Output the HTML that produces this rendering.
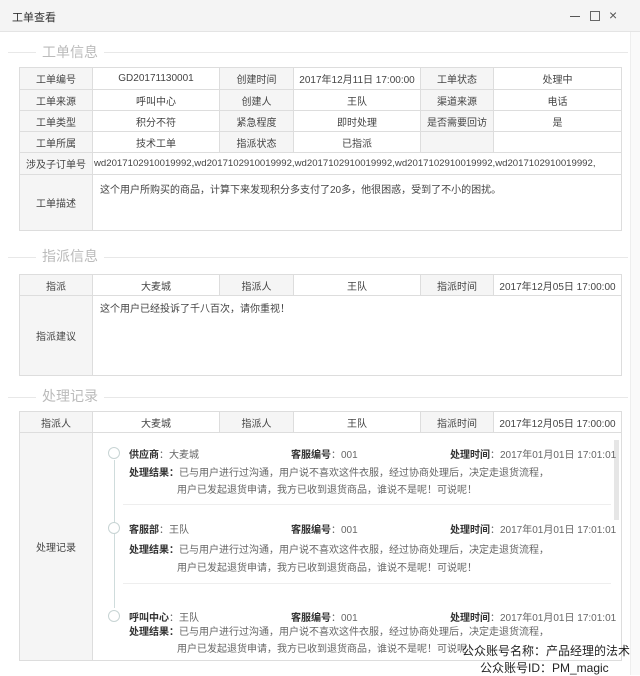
<!DOCTYPE html>
<html><head><meta charset="utf-8"><style>
*{margin:0;padding:0;box-sizing:border-box}
body{width:640px;height:675px;background:#fff;font-family:"Liberation Sans","Noto Sans CJK SC",sans-serif;font-size:10px;color:#444;position:relative;overflow:hidden}
.a{position:absolute;white-space:nowrap}
.tb{position:absolute;left:0;top:0;width:640px;height:32px;background:#f4f4f4;border-bottom:1px solid #e4e4e4}
.sec{position:absolute;left:8px;width:620px;height:1px;background:#e8e8e8}
.st{position:absolute;background:#fff;color:#bbb;font-size:14px;padding:0 6px;line-height:16px}
table{position:absolute;left:19px;width:602px;border-collapse:collapse;table-layout:fixed}
td{border:1px solid #ddd;text-align:center;font-size:10px;padding:0;white-space:nowrap;overflow:hidden}
td.h{background:#f5f5f5}
.c{position:absolute;width:12px;height:12px;border:1px solid #c8d4d4;border-radius:50%;background:#fff}
b{font-weight:bold;color:#333}
.g{color:#666}
</style></head><body>
<div class="tb"></div>
<div class="a" style="left:12px;top:9px;font-size:11px;color:#333">工单查看</div>
<div class="a" style="left:570px;top:16px;width:10px;height:1px;background:#555"></div>
<div class="a" style="left:590px;top:11px;width:10px;height:10px;border:1px solid #666"></div>
<div class="a" style="left:609px;top:7px;font-size:14px;color:#555">×</div>
<div class="a" style="right:0;top:32px;width:10px;height:643px;background:#fafafa;border-left:1px solid #eee"></div>

<div class="sec" style="top:52px"></div><div class="st" style="left:36px;top:44px">工单信息</div>
<table style="top:67px">
<colgroup><col style="width:73px"><col style="width:127px"><col style="width:74px"><col style="width:127px"><col style="width:73px"><col style="width:128px"></colgroup>
<tr style="height:22px"><td class="h">工单编号</td><td>GD20171130001</td><td class="h">创建时间</td><td>2017年12月11日 17:00:00</td><td class="h">工单状态</td><td>处理中</td></tr>
<tr style="height:21px"><td class="h">工单来源</td><td>呼叫中心</td><td class="h">创建人</td><td>王队</td><td class="h">渠道来源</td><td>电话</td></tr>
<tr style="height:21px"><td class="h">工单类型</td><td>积分不符</td><td class="h">紧急程度</td><td>即时处理</td><td class="h">是否需要回访</td><td>是</td></tr>
<tr style="height:21px"><td class="h">工单所属</td><td>技术工单</td><td class="h">指派状态</td><td>已指派</td><td class="h"></td><td></td></tr>
<tr style="height:22px"><td class="h">涉及子订单号</td><td colspan="5" style="text-align:left;padding-left:1px;font-size:9.6px">wd2017102910019992,wd2017102910019992,wd2017102910019992,wd2017102910019992,wd2017102910019992,</td></tr>
<tr style="height:56px"><td class="h">工单描述</td><td colspan="5" style="text-align:left;vertical-align:top;padding:6px 0 0 7px">这个用户所购买的商品，计算下来发现积分多支付了20多，他很困惑，受到了不小的困扰。</td></tr>
</table>

<div class="sec" style="top:257px"></div><div class="st" style="left:36px;top:248px">指派信息</div>
<table style="top:274px">
<colgroup><col style="width:73px"><col style="width:127px"><col style="width:74px"><col style="width:127px"><col style="width:73px"><col style="width:128px"></colgroup>
<tr style="height:21px"><td class="h">指派</td><td>大麦城</td><td class="h">指派人</td><td>王队</td><td class="h">指派时间</td><td>2017年12月05日 17:00:00</td></tr>
<tr style="height:80px"><td class="h">指派建议</td><td colspan="5" style="text-align:left;vertical-align:top;padding:4px 0 0 7px">这个用户已经投诉了千八百次，请你重视！</td></tr>
</table>

<div class="sec" style="top:397px"></div><div class="st" style="left:36px;top:388px">处理记录</div>
<table style="top:411px">
<colgroup><col style="width:73px"><col style="width:127px"><col style="width:74px"><col style="width:127px"><col style="width:73px"><col style="width:128px"></colgroup>
<tr style="height:21px"><td class="h">指派人</td><td>大麦城</td><td class="h">指派人</td><td>王队</td><td class="h">指派时间</td><td>2017年12月05日 17:00:00</td></tr>
<tr style="height:228px"><td class="h">处理记录</td><td colspan="5"></td></tr>
</table>
<div class="a" style="left:614px;top:440px;width:5px;height:80px;background:#e6e6e6"></div>
<div class="a" style="left:114px;top:460px;width:1px;height:148px;background:#cfdcdc"></div>
<div class="a" style="left:123px;top:504px;width:488px;height:1px;background:#eee"></div>
<div class="a" style="left:123px;top:583px;width:488px;height:1px;background:#eee"></div>

<div class="c" style="left:108px;top:447px"></div>
<div class="a" style="left:129px;top:446px"><b>供应商</b><span class="g">：大麦城</span></div>
<div class="a" style="left:291px;top:446px"><b>客服编号</b><span class="g">：001</span></div>
<div class="a" style="left:450px;top:446px"><b>处理时间</b><span class="g">：2017年01月01日 17:01:01</span></div>
<div class="a" style="left:129px;top:464px"><b>处理结果：</b><span class="g">已与用户进行过沟通，用户说不喜欢这件衣服，经过协商处理后，决定走退货流程，</span></div>
<div class="a g" style="left:177px;top:481px">用户已发起退货申请，我方已收到退货商品，谁说不是呢！可说呢！</div>

<div class="c" style="left:108px;top:522px"></div>
<div class="a" style="left:129px;top:521px"><b>客服部</b><span class="g">：王队</span></div>
<div class="a" style="left:291px;top:521px"><b>客服编号</b><span class="g">：001</span></div>
<div class="a" style="left:450px;top:521px"><b>处理时间</b><span class="g">：2017年01月01日 17:01:01</span></div>
<div class="a" style="left:129px;top:541px"><b>处理结果：</b><span class="g">已与用户进行过沟通，用户说不喜欢这件衣服，经过协商处理后，决定走退货流程，</span></div>
<div class="a g" style="left:177px;top:559px">用户已发起退货申请，我方已收到退货商品，谁说不是呢！可说呢！</div>

<div class="c" style="left:108px;top:610px"></div>
<div class="a" style="left:129px;top:609px"><b>呼叫中心</b><span class="g">：王队</span></div>
<div class="a" style="left:291px;top:609px"><b>客服编号</b><span class="g">：001</span></div>
<div class="a" style="left:450px;top:609px"><b>处理时间</b><span class="g">：2017年01月01日 17:01:01</span></div>
<div class="a" style="left:129px;top:623px"><b>处理结果：</b><span class="g">已与用户进行过沟通，用户说不喜欢这件衣服，经过协商处理后，决定走退货流程，</span></div>
<div class="a g" style="left:177px;top:640px">用户已发起退货申请，我方已收到退货商品，谁说不是呢！可说呢！</div>

<div class="a" style="left:462px;top:642px;font-size:12px;color:#222">公众账号名称：产品经理的法术</div>
<div class="a" style="left:480px;top:659px;font-size:12px;color:#222">公众账号ID：PM_magic</div>
</body></html>
